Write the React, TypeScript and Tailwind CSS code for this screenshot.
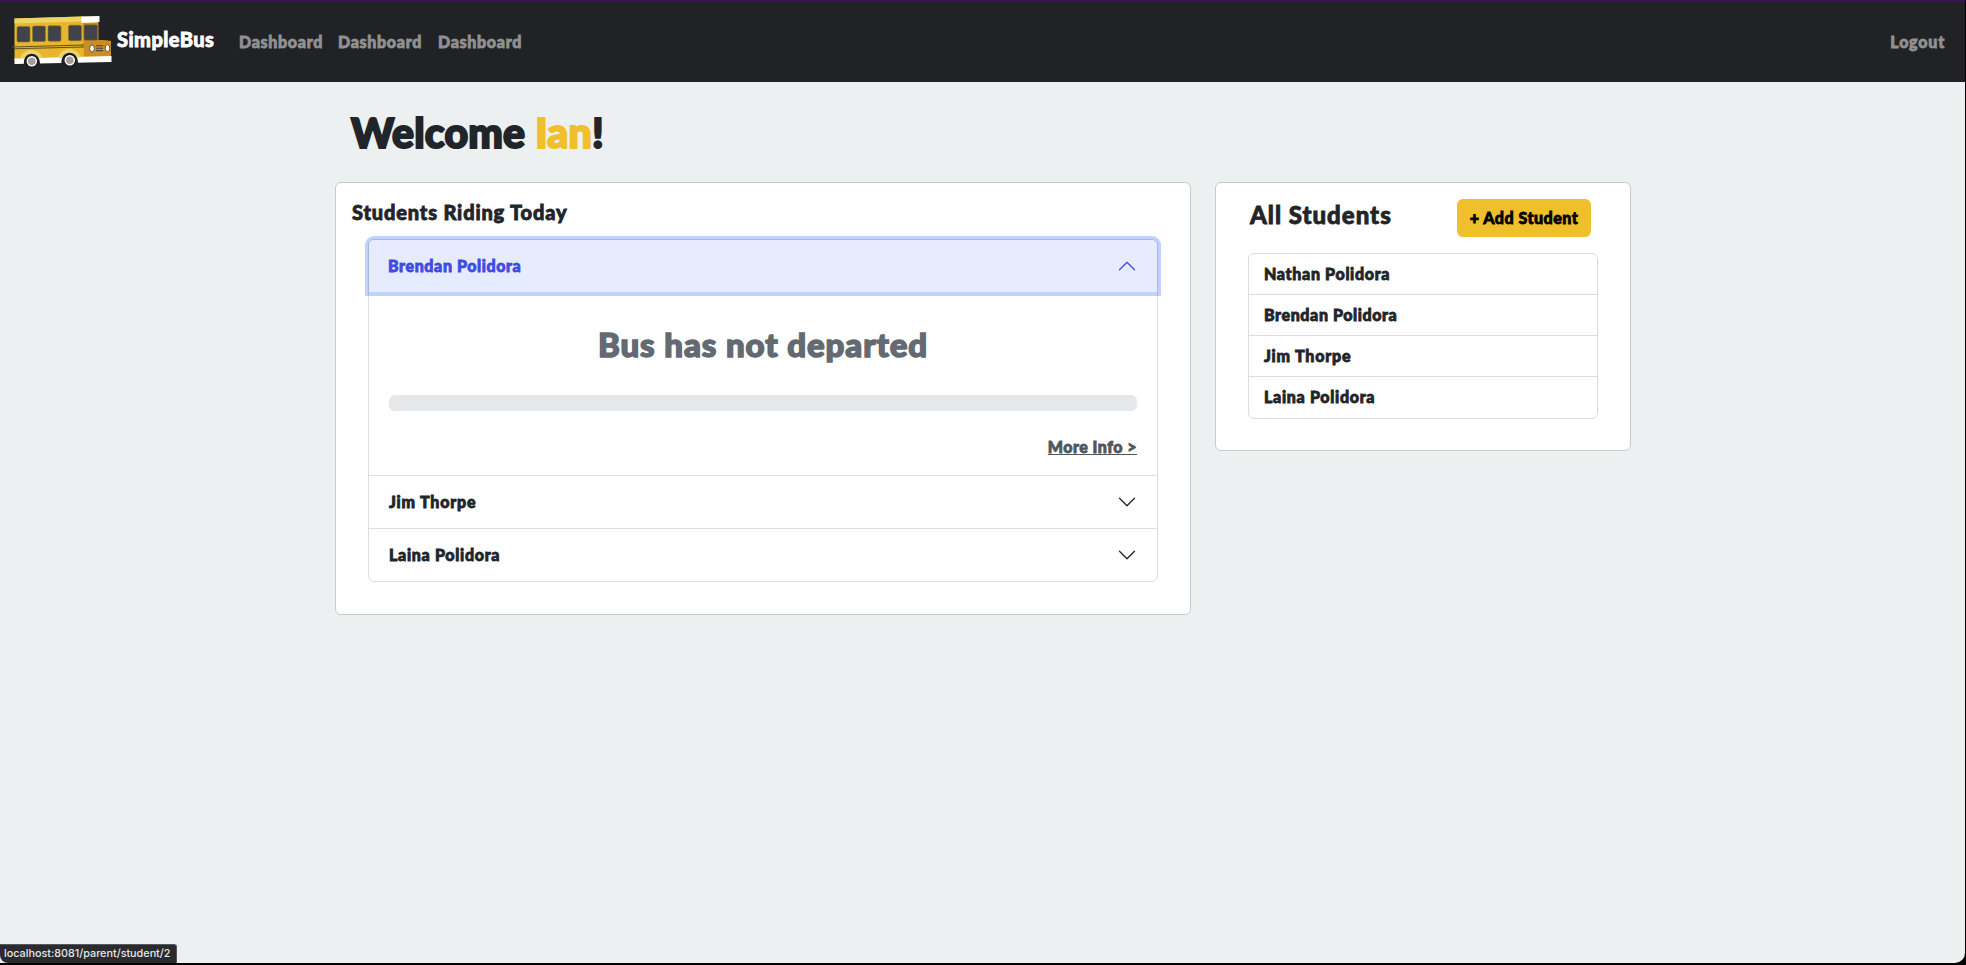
import React from "react";

const ridingLater = [
  { name: "Jim Thorpe", track: "tracking-[0.8px]" },
  { name: "Laina Polidora", track: "tracking-[0.7px]" },
];

const allStudents = [
  { name: "Nathan Polidora", track: "tracking-[0.67px]" },
  { name: "Brendan Polidora", track: "tracking-[0.6px]" },
  { name: "Jim Thorpe", track: "tracking-[0.8px]" },
  { name: "Laina Polidora", track: "tracking-[0.7px]" },
];

function BusLogo() {
  return (
    <svg width="100" height="54" viewBox="12 14 100 54" className="block shrink-0">
      <path d="M14.5 17.5 L82 15.5 L98 16 L98 39 L111 40 L111 57 L14.5 59 Z" fill="#e6b62c" />
      <path d="M14.5 17.5 L82 15.5 L82 20.5 L14.5 22.5 Z" fill="#ecd566" />
      <path d="M82.500 22 L98.500 22 L98.500 39 L111 40 L111 56 L84 56 Z" fill="#cd8d21" />
      <path d="M81.500 15.500 L99.500 15 L99.500 21 L81.500 22 Z" fill="#fff" />
      <g fill="#414349" stroke="#8d7428" strokeWidth="0.6">
        <rect x="17" y="25.500" width="13" height="15.500" rx="1.500" />
        <rect x="32.500" y="25" width="13" height="15.500" rx="1.500" />
        <rect x="48" y="24.700" width="13" height="15.500" rx="1.500" />
        <rect x="68.500" y="24.200" width="13" height="15.500" rx="1.500" />
        <rect x="84" y="23.800" width="13.500" height="15.500" rx="1.500" />
      </g>
      <path d="M12 46 L83 44 M14 47.800 L83 46" stroke="#5f5220" strokeWidth="1" fill="none" />
      <path d="M83 43 V47" stroke="#5f5220" strokeWidth="0.800" />
      <path d="M14.500 57.500 L111.500 55 L111.500 61 L14.500 63 Z" fill="#fff" />
      <path d="M20.500 57.500 C22 46.500 40 46 42.500 57.300 Z M58 57 C60 46 78 45 80.500 56.500 Z" fill="#ecd566" />
      <path d="M24 64 C22 49 41 49 40 64 Z M61.500 63 C60 48 79 48 78 63 Z" fill="#212225" />
      <g stroke="#1c1c1f" strokeWidth="1.500" fill="#fff">
        <circle cx="31.800" cy="60.200" r="6" />
        <circle cx="69.800" cy="59.300" r="6" />
      </g>
      <circle cx="31.800" cy="60.200" r="3.800" fill="#a39c98" />
      <circle cx="69.800" cy="59.300" r="3.800" fill="#a39c98" />
      <path d="M96 44.800 H103 M96 47.200 H103 M96 49.600 H103" stroke="#4a4336" strokeWidth="1.100" />
      <g fill="#fff" stroke="#5a5448" strokeWidth="1">
        <ellipse cx="92" cy="47.500" rx="2.400" ry="3.500" />
        <ellipse cx="107.500" cy="47.200" rx="2.400" ry="3.500" />
      </g>
    </svg>
  );
}

function Chevron({ className }: { className: string }) {
  return (
    <svg width="20" height="20" viewBox="0 0 16 16" className={className} fill="currentColor">
      <path
        fillRule="evenodd"
        d="M1.646 4.646a.5.5 0 0 1 .708 0L8 10.293l5.646-5.647a.5.5 0 0 1 .708.708l-6 6a.5.5 0 0 1-.708 0l-6-6a.5.5 0 0 1 0-.708z"
      />
    </svg>
  );
}

export default function App() {
  return (
    <div className="h-[965px] w-full overflow-hidden bg-black pr-px pb-[2px] font-['Lato','Open_Sans',sans-serif] text-base font-black text-[#212529]">
      <div className="relative flex h-full flex-col overflow-hidden rounded-br-[10px] bg-[#ecf0f1]">
        <nav className="flex h-[82px] shrink-0 items-center border-t-2 border-[#371355] bg-[#212225] pr-5 pl-3 [-webkit-text-stroke:0.8px_currentColor]">
          <BusLogo />
          <span className="ml-[5px] w-[98px] pb-1.5 text-[20px] tracking-[0.45px] whitespace-nowrap text-white">
            SimpleBus
          </span>
          <div className="ml-[24px] flex gap-4 tracking-[0.68px] text-[#909191]">
            <a className="w-[83px]">Dashboard</a>
            <a className="w-[84px]">Dashboard</a>
            <a className="w-[83px]">Dashboard</a>
          </div>
          <a className="ml-auto tracking-[0.8px] text-[#909191]">Logout</a>
        </nav>

        <main className="ml-[335px] w-[1296px] pt-[26px] [-webkit-text-stroke:0.8px_currentColor]">
          <h1 className="pl-4 text-[41px] leading-[50px] tracking-[0.2px] [-webkit-text-stroke:2px_currentColor]">
            Welcome <span className="text-[#f0c02c]">Ian</span>!
          </h1>

          <div className="mt-[24px] flex items-start justify-between">
            <section className="h-[433px] w-[856px] rounded-md border border-[#c8cbcc] bg-white pt-[17px] pr-8 pl-8">
              <h2 className="-ml-4 text-[20px] leading-6 tracking-[0.83px]">Students Riding Today</h2>
              <div className="mt-[15px] rounded-md border border-[#dbdee2]">
                <div className="flex h-[52px] items-center justify-between rounded-t-[5px] bg-[#e6ecfe] px-5 text-[#3f4be0] shadow-[0_0_0_4px_rgba(7,75,239,0.25)]">
                  <span className="-ml-px tracking-[0.6px]">Brendan Polidora</span>
                  <Chevron className="rotate-180" />
                </div>
                <div className="flex h-[184px] flex-col border-b border-[#dbdee2] px-5 pt-[33px]">
                  <p className="text-center text-[33px] leading-[38px] tracking-[0.9px] text-[#636a72] [-webkit-text-stroke:1.5px_currentColor]">
                    Bus has not departed
                  </p>
                  <div className="mt-[32px] h-4 rounded-md bg-[#e4e8eb]" />
                  <a className="mt-6 self-end leading-6 tracking-[0.47px] text-[#50565c] underline">More Info &gt;</a>
                </div>
                {ridingLater.map((s, i) => (
                  <div
                    key={s.name}
                    className={
                      i === 0
                        ? "flex h-[53px] items-center justify-between border-b border-[#dbdee2] px-5"
                        : "flex h-[52px] items-center justify-between px-5"
                    }
                  >
                    <span className={s.track}>{s.name}</span>
                    <Chevron className="" />
                  </div>
                ))}
              </div>
            </section>

            <section className="h-[269px] w-[416px] rounded-md border border-[#c8cbcc] bg-white px-8 pt-4">
              <div className="flex justify-between pr-[7px] pl-0.5">
                <h2 className="text-[24px] leading-[31px] tracking-[1px]">All Students</h2>
                <button className="h-[38px] w-[134px] rounded-md bg-[#f0c02c] text-center tracking-[0.5px] whitespace-nowrap text-black">
                  + Add Student
                </button>
              </div>
              <ul className="mt-4 divide-y divide-[#dadcde] rounded-md border border-[#dadcde]">
                {allStudents.map((s) => (
                  <li key={s.name} className="h-[41px] px-[15px] leading-[40px]">
                    <span className={s.track}>{s.name}</span>
                  </li>
                ))}
              </ul>
            </section>
          </div>
        </main>

        <div className="absolute bottom-0 left-0 flex h-[19px] w-[177px] items-center rounded-tr-[3px] rounded-bl-[8px] border-t border-r border-[#56585a] bg-[#2a2b2e] pl-1 font-['Inter',sans-serif] text-[10.8px] font-medium whitespace-nowrap text-[#e6e7e8]">
          localhost:8081/parent/student/2
        </div>
      </div>
    </div>
  );
}
